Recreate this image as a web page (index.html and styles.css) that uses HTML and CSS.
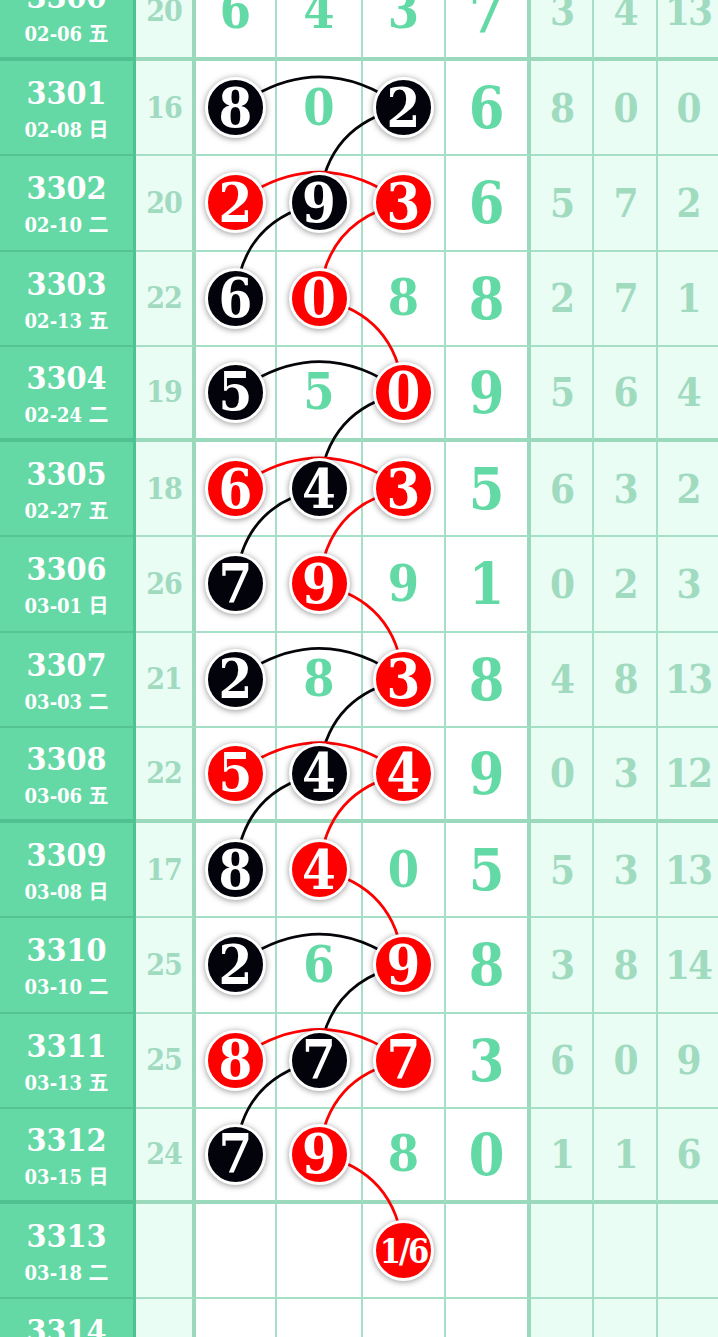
FILE: index.html
```html
<!DOCTYPE html>
<html lang="zh">
<head>
<meta charset="utf-8">
<title>走势图</title>
<link rel="stylesheet" href="styles.css">
</head>
<body>
<div class="chart">
  <svg class="links" viewBox="0 0 718 1428.75" xmlns="http://www.w3.org/2000/svg">
    <g class="bk">
      <path d="M235.5 141.9 Q319.5 79.9 403.5 141.9"/>
      <path d="M403.5 141.9 Q326.3 158.5 319 237.1"/>
      <path d="M319 237.1 Q242.3 254.1 235.5 332.4"/>
      <path d="M235.5 426.6 Q319.5 364.6 403.5 426.6"/>
      <path d="M403.5 426.6 Q326.3 443.2 319 522.9"/>
      <path d="M319 522.9 Q242.3 539.9 235.5 618.1"/>
      <path d="M235.5 713.4 Q319.5 651.4 403.5 713.4"/>
      <path d="M403.5 713.4 Q326.3 730 319 807.6"/>
      <path d="M319 807.6 Q242.3 824.6 235.5 903.9"/>
      <path d="M235.5 999.1 Q319.5 937.1 403.5 999.1"/>
      <path d="M403.5 999.1 Q326.3 1015.7 319 1094.4"/>
      <path d="M319 1094.4 Q242.3 1111.4 235.5 1188.6"/>
    </g>
    <g class="rd">
      <path d="M235.5 237.1 Q319.5 175.1 403.5 237.1"/>
      <path d="M403.5 237.1 Q326.3 253.7 319 332.4"/>
      <path d="M319 332.4 Q396.2 349 403.5 426.6"/>
      <path d="M235.5 522.9 Q319.5 460.9 403.5 522.9"/>
      <path d="M403.5 522.9 Q326.3 539.5 319 618.1"/>
      <path d="M319 618.1 Q396.2 634.7 403.5 713.4"/>
      <path d="M235.5 807.6 Q319.5 745.6 403.5 807.6"/>
      <path d="M403.5 807.6 Q326.3 824.2 319 903.9"/>
      <path d="M319 903.9 Q396.2 920.5 403.5 999.1"/>
      <path d="M235.5 1094.4 Q319.5 1032.4 403.5 1094.4"/>
      <path d="M403.5 1094.4 Q326.3 1111 319 1188.6"/>
      <path d="M319 1188.6 Q396.2 1205.2 403.5 1284.9"/>
    </g>
  </svg>

  <div class="row sep">
    <div class="issue"><span class="num">3300</span><span class="date">02-06 五</span></div>
    <div class="sum">20</div>
    <div class="d">6</div><div class="d">4</div><div class="d">3</div>
    <div class="wei">7</div>
    <div class="r">3</div><div class="r">4</div><div class="r">13</div>
  </div>
  <div class="row">
    <div class="issue"><span class="num">3301</span><span class="date">02-08 日</span></div>
    <div class="sum">16</div>
    <div class="d"><span class="ball black">8</span></div><div class="d">0</div><div class="d"><span class="ball black">2</span></div>
    <div class="wei">6</div>
    <div class="r">8</div><div class="r">0</div><div class="r">0</div>
  </div>
  <div class="row">
    <div class="issue"><span class="num">3302</span><span class="date">02-10 二</span></div>
    <div class="sum">20</div>
    <div class="d"><span class="ball red">2</span></div><div class="d"><span class="ball black">9</span></div><div class="d"><span class="ball red">3</span></div>
    <div class="wei">6</div>
    <div class="r">5</div><div class="r">7</div><div class="r">2</div>
  </div>
  <div class="row">
    <div class="issue"><span class="num">3303</span><span class="date">02-13 五</span></div>
    <div class="sum">22</div>
    <div class="d"><span class="ball black">6</span></div><div class="d"><span class="ball red">0</span></div><div class="d">8</div>
    <div class="wei">8</div>
    <div class="r">2</div><div class="r">7</div><div class="r">1</div>
  </div>
  <div class="row sep">
    <div class="issue"><span class="num">3304</span><span class="date">02-24 二</span></div>
    <div class="sum">19</div>
    <div class="d"><span class="ball black">5</span></div><div class="d">5</div><div class="d"><span class="ball red">0</span></div>
    <div class="wei">9</div>
    <div class="r">5</div><div class="r">6</div><div class="r">4</div>
  </div>
  <div class="row">
    <div class="issue"><span class="num">3305</span><span class="date">02-27 五</span></div>
    <div class="sum">18</div>
    <div class="d"><span class="ball red">6</span></div><div class="d"><span class="ball black">4</span></div><div class="d"><span class="ball red">3</span></div>
    <div class="wei">5</div>
    <div class="r">6</div><div class="r">3</div><div class="r">2</div>
  </div>
  <div class="row">
    <div class="issue"><span class="num">3306</span><span class="date">03-01 日</span></div>
    <div class="sum">26</div>
    <div class="d"><span class="ball black">7</span></div><div class="d"><span class="ball red">9</span></div><div class="d">9</div>
    <div class="wei">1</div>
    <div class="r">0</div><div class="r">2</div><div class="r">3</div>
  </div>
  <div class="row">
    <div class="issue"><span class="num">3307</span><span class="date">03-03 二</span></div>
    <div class="sum">21</div>
    <div class="d"><span class="ball black">2</span></div><div class="d">8</div><div class="d"><span class="ball red">3</span></div>
    <div class="wei">8</div>
    <div class="r">4</div><div class="r">8</div><div class="r">13</div>
  </div>
  <div class="row sep">
    <div class="issue"><span class="num">3308</span><span class="date">03-06 五</span></div>
    <div class="sum">22</div>
    <div class="d"><span class="ball red">5</span></div><div class="d"><span class="ball black">4</span></div><div class="d"><span class="ball red">4</span></div>
    <div class="wei">9</div>
    <div class="r">0</div><div class="r">3</div><div class="r">12</div>
  </div>
  <div class="row">
    <div class="issue"><span class="num">3309</span><span class="date">03-08 日</span></div>
    <div class="sum">17</div>
    <div class="d"><span class="ball black">8</span></div><div class="d"><span class="ball red">4</span></div><div class="d">0</div>
    <div class="wei">5</div>
    <div class="r">5</div><div class="r">3</div><div class="r">13</div>
  </div>
  <div class="row">
    <div class="issue"><span class="num">3310</span><span class="date">03-10 二</span></div>
    <div class="sum">25</div>
    <div class="d"><span class="ball black">2</span></div><div class="d">6</div><div class="d"><span class="ball red">9</span></div>
    <div class="wei">8</div>
    <div class="r">3</div><div class="r">8</div><div class="r">14</div>
  </div>
  <div class="row">
    <div class="issue"><span class="num">3311</span><span class="date">03-13 五</span></div>
    <div class="sum">25</div>
    <div class="d"><span class="ball red">8</span></div><div class="d"><span class="ball black">7</span></div><div class="d"><span class="ball red">7</span></div>
    <div class="wei">3</div>
    <div class="r">6</div><div class="r">0</div><div class="r">9</div>
  </div>
  <div class="row sep">
    <div class="issue"><span class="num">3312</span><span class="date">03-15 日</span></div>
    <div class="sum">24</div>
    <div class="d"><span class="ball black">7</span></div><div class="d"><span class="ball red">9</span></div><div class="d">8</div>
    <div class="wei">0</div>
    <div class="r">1</div><div class="r">1</div><div class="r">6</div>
  </div>
  <div class="row">
    <div class="issue"><span class="num">3313</span><span class="date">03-18 二</span></div>
    <div class="sum"></div>
    <div class="d"></div><div class="d"></div><div class="d"><span class="ball red small">1/6</span></div>
    <div class="wei"></div>
    <div class="r"></div><div class="r"></div><div class="r"></div>
  </div>
  <div class="row">
    <div class="issue"><span class="num">3314</span><span class="date">03-21 五</span></div>
    <div class="sum"></div>
    <div class="d"></div><div class="d"></div><div class="d"></div>
    <div class="wei"></div>
    <div class="r"></div><div class="r"></div><div class="r"></div>
  </div>
</div>
</body>
</html>
```

FILE: styles.css
```css
html, body {
  margin: 0;
  padding: 0;
  background: #ffffff;
}

body {
  overflow: hidden;
  font-family: "DejaVu Serif Condensed", "DejaVu Serif", "Noto Sans CJK SC", serif;
}

.chart {
  position: relative;
  width: 718px;
  margin-top: -34.25px;
}

.links {
  position: absolute;
  left: 0;
  top: 0;
  width: 718px;
  height: 1428.75px;
  z-index: 1;
  pointer-events: none;
  fill: none;
  stroke-width: 2.7;
  stroke-linecap: round;
}

.links .bk { stroke: #05050a; }
.links .rd { stroke: #ff0000; }

.row {
  display: grid;
  grid-template-columns: 136px 60px 81px 86px 83px 85px 63px 64px 60px;
  height: 95.25px;
}

.row > div {
  box-sizing: border-box;
  display: flex;
  align-items: center;
  justify-content: center;
  border-bottom: 2px solid #a5dfc5;
  border-right: 2px solid #a5dfc5;
  font-weight: bold;
  line-height: 1;
}

.row.sep > div {
  border-bottom-width: 4px;
  border-bottom-color: #9bd9bc;
}

.row > .issue {
  flex-direction: column;
  background: #64d9a6;
  border-right: 3px solid #50c291;
  border-bottom-color: #54c494;
  color: #ffffff;
  padding-top: 3px;
}

.row.sep > .issue {
  border-bottom-color: #50c190;
}

.num {
  display: block;
  font-size: 32px;
  font-weight: bold;
  line-height: 34px;
}

.date {
  display: block;
  margin-top: 8px;
  font-size: 20px;
  line-height: 24px;
  font-weight: bold;
}

.row > .sum {
  background: #e9fdf5;
  border-right: 4px solid #9bd9bc;
  color: #a0dabf;
  font-size: 30px;
  letter-spacing: -1px;
}

.row > .d {
  background: #ffffff;
  color: #63daa6;
  font-size: 50px;
}

.row > .wei {
  background: #ffffff;
  border-right: 4px solid #9bd9bc;
  color: #63daa6;
  font-size: 57px;
}

.row > .r {
  background: #e9fdf5;
  color: #a0dabf;
  font-size: 40px;
  letter-spacing: -2px;
}

.row > .r:last-child {
  border-right: none;
}

.ball {
  position: relative;
  z-index: 2;
  box-sizing: border-box;
  width: 61px;
  height: 61px;
  border-radius: 50%;
  border: 3px solid #ffffff;
  box-shadow: 0 1px 6px rgba(0, 0, 0, 0.42);
  display: flex;
  align-items: center;
  justify-content: center;
  color: #ffffff;
  font-size: 54px;
  font-weight: bold;
  line-height: 1;
}

.ball.black { background: #03030b; }
.ball.red { background: #ff0000; }

.ball.small {
  font-size: 34px;
  letter-spacing: -2px;
}
```
